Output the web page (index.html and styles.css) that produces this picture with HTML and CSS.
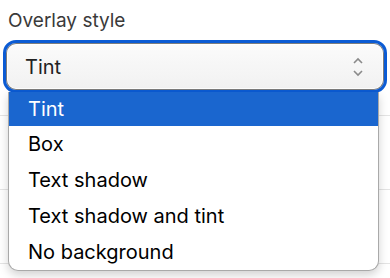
FILE: index.html
```html
<!DOCTYPE html>
<html lang="en">
<head>
    <meta charset="UTF-8">
    <title>Overlay style</title>
    <link rel="stylesheet" href="styles.css">
</head>
<body>
    <div class="field">
        <label class="field-label" for="overlay">Overlay style</label>
        <div class="select-wrap">
            <div class="select" id="overlay">
                <span class="select-value">Tint</span>
                <svg class="select-arrows" width="12" height="22" viewBox="0 0 12 22">
                    <path d="M2 7 L6 3 L10 7" fill="none" stroke="#8a8a8a" stroke-width="1.6"/>
                    <path d="M2 15 L6 19 L10 15" fill="none" stroke="#8a8a8a" stroke-width="1.6"/>
                </svg>
            </div>
            <ul class="menu">
                <li class="menu-item active">Tint</li>
                <li class="menu-item">Box</li>
                <li class="menu-item">Text shadow</li>
                <li class="menu-item">Text shadow and tint</li>
                <li class="menu-item">No background</li>
            </ul>
        </div>
    </div>

    <div class="rows">
        <div class="row"></div>
        <div class="row"></div>
        <div class="row"></div>
    </div>
</body>
</html>
```

FILE: styles.css
```css
body {
    margin: 0;
    min-height: 100vh;
    font-family: Inter, "Noto Sans", sans-serif;
    background: #fff;
    color: #111;
}

.field {
    padding: 8px 3px 0 3px;
}

.field-label {
    display: block;
    padding-left: 5px;
    font-size: 19px;
    color: #3a3a3a;
    line-height: 26px;
}

.select-wrap {
    position: relative;
    margin-top: 6px;
}

.select {
    display: flex;
    align-items: center;
    justify-content: space-between;
    height: 47px;
    border: 3px solid #0b5bd4;
    border-radius: 13px;
    padding: 0 20px 0 19px;
    background: linear-gradient(#fbfbfb, #f1f1f1);
    box-shadow: inset 0 0 0 1px #7d7d7d, inset 0 0 0 2px #fff;
    font-size: 20px;
    color: #222;
}

.select-arrows {
    display: block;
}

.menu {
    position: absolute;
    top: 52px;
    left: 5px;
    right: 8px;
    margin: 0;
    padding: 0;
    list-style: none;
    background: #fff;
    border: 1px solid #a9a9a9;
    border-top: none;
    border-radius: 0 0 10px 10px;
    box-shadow: 0 4px 10px rgba(0, 0, 0, 0.18);
    z-index: 2;
}

.menu-item {
    height: 36px;
    line-height: 36px;
    padding-left: 19px;
    font-size: 20px;
    color: #000;
}

.menu-item.active {
    background: #1a66cf;
    color: #fff;
    height: 34px;
    line-height: 34px;
}

.rows {
    margin-top: 22px;
}

.row {
    height: 73px;
    border-top: 1px solid #e4e4e4;
}

.row:last-child {
    height: 0;
}
```
